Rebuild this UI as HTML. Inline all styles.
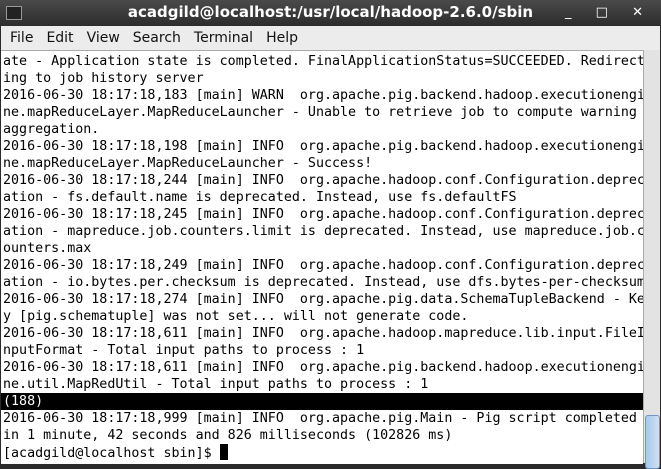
<!DOCTYPE html><html><head><style>
body{margin:0;width:661px;height:465px;overflow:hidden;background:#2a2a2a;font-family:"DejaVu Sans","Liberation Sans",sans-serif}
#t{position:absolute;left:0;top:0;width:661px;height:26px;background:linear-gradient(#4a4a4a,#2c2c2c);color:#fff;font-weight:bold;font-size:15px;text-align:center;line-height:25px}
#ic{position:absolute;left:6px;top:6px;width:14px;height:12px;background:#222;border:1px solid #999}
#ctl{position:absolute;right:8px;top:0;font-size:13px;font-weight:normal;letter-spacing:10px}
#m{position:absolute;left:1px;top:26px;width:659px;height:24px;background:#ececec;font-size:14px;line-height:25px;color:#111}
#m span{margin-left:9px;margin-right:4px}
#c{position:absolute;left:1px;top:50px;width:642px;height:413px;background:#fff;border-top:1px solid #aaa}
pre{margin:0;padding:2px 0 0 2px;font-family:"DejaVu Sans Mono","Liberation Mono",monospace;font-size:13.33px;line-height:17px;color:#000}
.h{background:#000;color:#fff;display:block;margin-left:-2px;padding-left:2px}
#s{position:absolute;left:643px;top:50px;width:16px;height:413px;background:#e3e3e3;border-left:1px solid #aaa}
#th{position:absolute;left:1px;top:365px;width:13px;height:52px;background:linear-gradient(90deg,#a8c8ec,#cfe0f4);border:1px solid #6f96c6;border-radius:3px}
.cur{display:inline-block;width:8px;height:16px;background:#000;vertical-align:-3px}
</style></head><body>
<div id="t"><div id="ic"></div>acadgild@localhost:/usr/local/hadoop-2.6.0/sbin<span id="ctl">_ □ ✕</span></div>
<div id="m"><span>File</span><span>Edit</span><span>View</span><span>Search</span><span>Terminal</span><span>Help</span></div>
<div id="c"><pre>ate - Application state is completed. FinalApplicationStatus=SUCCEEDED. Redirect
ing to job history server
2016-06-30 18:17:18,183 [main] WARN  org.apache.pig.backend.hadoop.executionengi
ne.mapReduceLayer.MapReduceLauncher - Unable to retrieve job to compute warning 
aggregation.
2016-06-30 18:17:18,198 [main] INFO  org.apache.pig.backend.hadoop.executionengi
ne.mapReduceLayer.MapReduceLauncher - Success!
2016-06-30 18:17:18,244 [main] INFO  org.apache.hadoop.conf.Configuration.deprec
ation - fs.default.name is deprecated. Instead, use fs.defaultFS
2016-06-30 18:17:18,245 [main] INFO  org.apache.hadoop.conf.Configuration.deprec
ation - mapreduce.job.counters.limit is deprecated. Instead, use mapreduce.job.c
ounters.max
2016-06-30 18:17:18,249 [main] INFO  org.apache.hadoop.conf.Configuration.deprec
ation - io.bytes.per.checksum is deprecated. Instead, use dfs.bytes-per-checksum
2016-06-30 18:17:18,274 [main] INFO  org.apache.pig.data.SchemaTupleBackend - Ke
y [pig.schematuple] was not set... will not generate code.
2016-06-30 18:17:18,611 [main] INFO  org.apache.hadoop.mapreduce.lib.input.FileI
nputFormat - Total input paths to process : 1
2016-06-30 18:17:18,611 [main] INFO  org.apache.pig.backend.hadoop.executionengi
ne.util.MapRedUtil - Total input paths to process : 1
<span class="h">(188)</span>2016-06-30 18:17:18,999 [main] INFO  org.apache.pig.Main - Pig script completed
in 1 minute, 42 seconds and 826 milliseconds (102826 ms)
[acadgild@localhost sbin]$ <span class="cur"></span></pre></div>
<div id="s"><div id="th"></div></div>
</body></html>
